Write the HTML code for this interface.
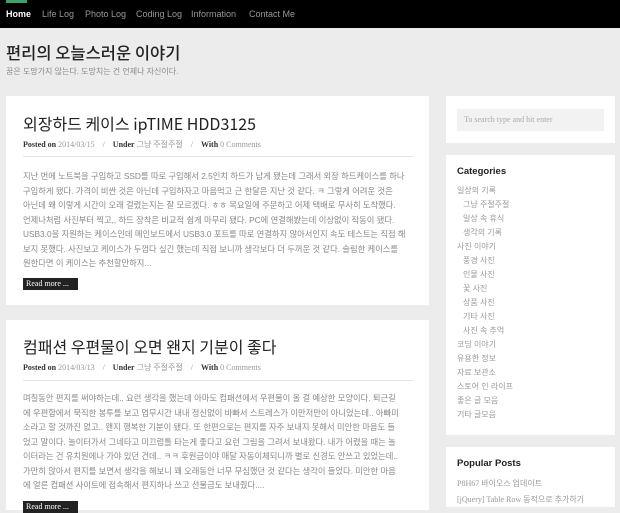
<!DOCTYPE html>
<html><head><meta charset="utf-8"><style>
*{margin:0;padding:0;box-sizing:border-box}
body{width:620px;height:504px;overflow:hidden;background:#ececec;font-family:"Liberation Sans","Noto Sans CJK KR",sans-serif;color:#777;position:relative}
.nav{position:absolute;left:0;top:0;width:620px;height:28px;background:#000}
.green{position:absolute;left:6px;top:0;width:21px;height:3px;background:#3fa06a}
.nav span{position:absolute;top:9px;font-size:9px;color:#999;font-family:"Liberation Sans","Noto Sans CJK KR",sans-serif}
.nav span.h{color:#fff;font-weight:bold}
.t1{position:absolute;left:6px;top:40px;font-size:16.5px;color:#222;font-weight:500;font-family:"Noto Sans CJK KR",sans-serif;line-height:24px}
.t2{position:absolute;left:6px;top:66px;font-size:8px;color:#888}
.box{position:absolute;background:#fff}
.pt{position:absolute;left:23px;font-size:16px;color:#222;white-space:nowrap;font-family:"Noto Sans CJK KR",sans-serif;line-height:24px}
.meta{position:absolute;left:23px;font-size:8px;color:#999;font-family:"Liberation Serif","Noto Sans CJK KR",serif;white-space:nowrap}
.meta b{color:#333}
.hr{position:absolute;left:23px;width:390px;height:1px;background:#e6e6e6}
.txt{position:absolute;left:23px;width:395px;font-size:8.3px;line-height:14.5px;color:#888;white-space:nowrap}
.rm{position:absolute;left:23px;width:55px;height:12px;background:#222;color:#fff;font-size:8px;font-family:"Liberation Serif",serif;padding:1px 0 0 3px}
.wh{position:absolute;left:27px;font-size:9.5px;color:#222;font-weight:bold}
.li{position:absolute;left:27px;font-size:8px;color:#999;white-space:nowrap}
</style></head><body>
<div class="nav"><div class="green"></div>
<span class="h" style="left:6px">Home</span><span style="left:42px">Life Log</span><span style="left:85px">Photo Log</span><span style="left:136px">Coding Log</span><span style="left:191px">Information</span><span style="left:249px">Contact Me</span></div>
<div class="t1">편리의 오늘스러운 이야기</div>
<div class="t2">꿈은 도망가지 않는다. 도망치는 건 언제나 자신이다.</div>

<div class="box" style="left:6px;top:96px;width:423px;height:209px"></div>
<div class="pt" style="top:111px">외장하드 케이스 ipTIME HDD3125</div>
<div class="meta" style="top:139px"><b>Posted on</b> 2014/03/15 &nbsp;&nbsp; / &nbsp;&nbsp; <b>Under</b> 그냥 주절주절 &nbsp;&nbsp; / &nbsp;&nbsp; <b>With</b> 0 Comments</div>
<div class="hr" style="top:156px"></div>
<div class="txt" style="top:169px">지난 번에 노트북을 구입하고 SSD를 따로 구입해서 2.5인치 하드가 남게 됐는데 그래서 외장 하드케이스를 하나<br>구입하게 됐다. 가격이 비싼 것은 아닌데 구입하자고 마음먹고 근 한달은 지난 것 같다. ㅋ 그렇게 어려운 것은<br>아닌데 왜 이렇게 시간이 오래 걸렸는지는 잘 모르겠다. ㅎㅎ 목요일에 주문하고 어제 택배로 무사히 도착했다.<br>언제나처럼 사진부터 찍고,, 하드 장착은 비교적 쉽게 마무리 됐다. PC에 연결해봤는데 이상없이 작동이 됐다.<br>USB3.0을 지원하는 케이스인데 메인보드에서 USB3.0 포트를 따로 연결하지 않아서인지 속도 테스트는 직접 해<br>보지 못했다. 사진보고 케이스가 두껍다 싶긴 했는데 직접 보니까 생각보다 더 두꺼운 것 같다. 슬림한 케이스를<br>원한다면 이 케이스는 추천할만하지...</div>
<div class="rm" style="top:278px">Read more ...</div>

<div class="box" style="left:6px;top:320px;width:423px;height:190px"></div>
<div class="pt" style="top:334px">컴패션 우편물이 오면 왠지 기분이 좋다</div>
<div class="meta" style="top:362px"><b>Posted on</b> 2014/03/13 &nbsp;&nbsp; / &nbsp;&nbsp; <b>Under</b> 그냥 주절주절 &nbsp;&nbsp; / &nbsp;&nbsp; <b>With</b> 0 Comments</div>
<div class="hr" style="top:380px"></div>
<div class="txt" style="top:391px">며칠동안 편지를 써야하는데.. 요런 생각을 했는데 아마도 컴패션에서 우편물이 올 걸 예상한 모양이다. 퇴근길<br>에 우편함에서 묵직한 봉투를 보고 업무시간 내내 정신없이 바빠서 스트레스가 이만저만이 아니었는데.. 아빠미<br>소라고 할 것까진 없고.. 왠지 행복한 기분이 됐다. 또 한편으로는 편지를 자주 보내지 못해서 미안한 마음도 들<br>었고 말이다. 놀이터가서 그네타고 미끄럼틀 타는게 좋다고 요런 그림을 그려서 보내왔다. 내가 어렸을 때는 놀<br>이터라는 건 유치원에나 가야 있던 건데.. ㅋㅋ 후원금이야 매달 자동이체되니까 별로 신경도 안쓰고 있었는데..<br>가만히 앉아서 편지를 보면서 생각을 해보니 꽤 오래동안 너무 무심했던 것 같다는 생각이 들었다. 미안한 마음<br>에 얼른 컴패션 사이트에 접속해서 편지하나 쓰고 선물금도 보내줬다....</div>
<div class="rm" style="top:501px">Read more ...</div>

<div class="box" style="left:446px;top:96px;width:169px;height:47px"></div>
<div style="position:absolute;left:457px;top:109px;width:147px;height:22px;background:#f2f2f2;font-size:8px;color:#aaa;font-family:'Liberation Serif',serif;padding:6px 0 0 7px">To search type and hit enter</div>

<div class="box" style="left:446px;top:155px;width:169px;height:280px"></div>
<div class="wh" style="left:457px;top:166px">Categories</div>
<div class="li" style="left:457px;top:185px">일상의 기록</div>
<div class="li" style="left:463px;top:199px">그냥 주절주절</div>
<div class="li" style="left:463px;top:213px">일상 속 휴식</div>
<div class="li" style="left:463px;top:227px">생각의 기록</div>
<div class="li" style="left:457px;top:241px">사진 이야기</div>
<div class="li" style="left:463px;top:255px">풍경 사진</div>
<div class="li" style="left:463px;top:269px">인물 사진</div>
<div class="li" style="left:463px;top:283px">꽃 사진</div>
<div class="li" style="left:463px;top:297px">상품 사진</div>
<div class="li" style="left:463px;top:311px">기타 사진</div>
<div class="li" style="left:463px;top:325px">사진 속 추억</div>
<div class="li" style="left:457px;top:339px">코딩 이야기</div>
<div class="li" style="left:457px;top:353px">유용한 정보</div>
<div class="li" style="left:457px;top:367px">자료 보관소</div>
<div class="li" style="left:457px;top:381px">스토어 인 라이프</div>
<div class="li" style="left:457px;top:395px">좋은 글 모음</div>
<div class="li" style="left:457px;top:409px">기타 글모음</div>

<div class="box" style="left:446px;top:447px;width:169px;height:60px"></div>
<div class="wh" style="left:457px;top:458px">Popular Posts</div>
<div class="li" style="left:457px;top:478px;font-family:'Liberation Serif','Noto Sans CJK KR',serif">P8H67 바이오스 업데이트</div>
<div class="li" style="left:457px;top:494px;font-family:'Liberation Serif','Noto Sans CJK KR',serif">[jQuery] Table Row 동적으로 추가하기</div>
</body></html>
